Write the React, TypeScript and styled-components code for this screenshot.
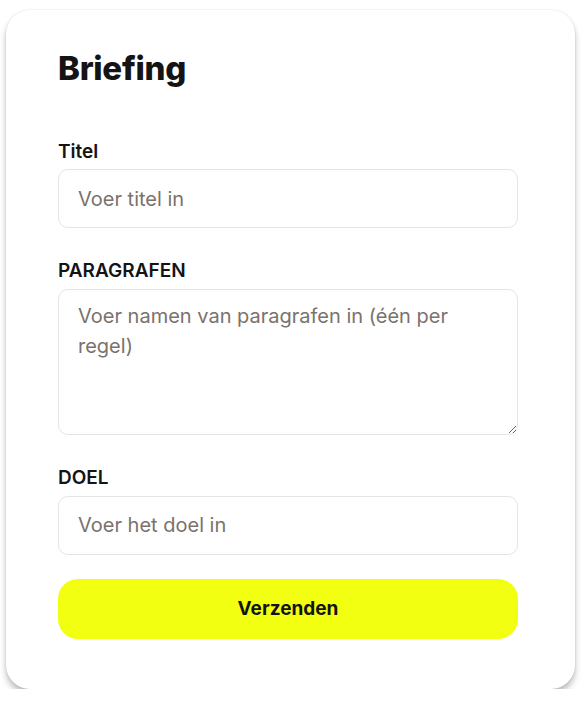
import styled, { createGlobalStyle } from "styled-components";

const GlobalStyle = createGlobalStyle`
  body {
    margin: 0;
    background: #ffffff;
    font-family: Inter, "Noto Sans", sans-serif;
    color: #141414;
  }
`;

const Card = styled.form`
  box-sizing: border-box;
  width: 569px;
  margin: 10px 0 0 6px;
  padding: 39px 57px 50px 52px;
  background: #ffffff;
  border-radius: 24px;
  box-shadow: 0 5px 6px rgba(0, 0, 0, 0.26), 0 0 2px rgba(0, 0, 0, 0.12);
  display: flex;
  flex-direction: column;
`;

const Title = styled.h1`
  margin: 0 0 52px;
  font-size: 33px;
  line-height: 1.2;
  font-weight: 800;
  letter-spacing: -0.3px;
  color: #141414;
`;

const Field = styled.div`
  display: flex;
  flex-direction: column;
  gap: 6px;
  margin-bottom: 32px;

  &:last-of-type {
    margin-bottom: 24px;
  }
`;

const Label = styled.label<{ $upper?: boolean }>`
  font-size: 19px;
  line-height: 1.2;
  font-weight: 600;
  color: #141414;
  text-transform: ${(p) => (p.$upper ? "uppercase" : "none")};
`;

const fieldBase = `
  box-sizing: border-box;
  width: 100%;
  border: 1px solid #e4e4e4;
  border-radius: 10px;
  background: #ffffff;
  font-family: Inter, "Noto Sans", sans-serif;
  font-size: 20px;
  color: #141414;
  outline: none;
  &::placeholder {
    color: #7a726c;
  }
`;

const TextInput = styled.input`
  ${fieldBase}
  height: 59px;
  padding: 0 19px;
`;

const TextArea = styled.textarea`
  ${fieldBase}
  height: 146px;
  padding: 11px 19px;
  line-height: 30px;
  resize: vertical;
`;

const SubmitButton = styled.button`
  height: 60px;
  border: none;
  border-radius: 20px;
  background: #f3ff10;
  font-family: Inter, "Noto Sans", sans-serif;
  font-size: 19px;
  font-weight: 700;
  color: #141414;
  cursor: pointer;
`;

export default function App() {
  return (
    <>
      <GlobalStyle />
      <Card onSubmit={(e) => e.preventDefault()}>
        <Title>Briefing</Title>
        <Field>
          <Label htmlFor="titel">Titel</Label>
          <TextInput id="titel" placeholder="Voer titel in" />
        </Field>
        <Field>
          <Label htmlFor="paragrafen" $upper>
            Paragrafen
          </Label>
          <TextArea
            id="paragrafen"
            placeholder="Voer namen van paragrafen in (één per regel)"
          />
        </Field>
        <Field>
          <Label htmlFor="doel" $upper>
            Doel
          </Label>
          <TextInput id="doel" placeholder="Voer het doel in" />
        </Field>
        <SubmitButton type="submit">Verzenden</SubmitButton>
      </Card>
    </>
  );
}
